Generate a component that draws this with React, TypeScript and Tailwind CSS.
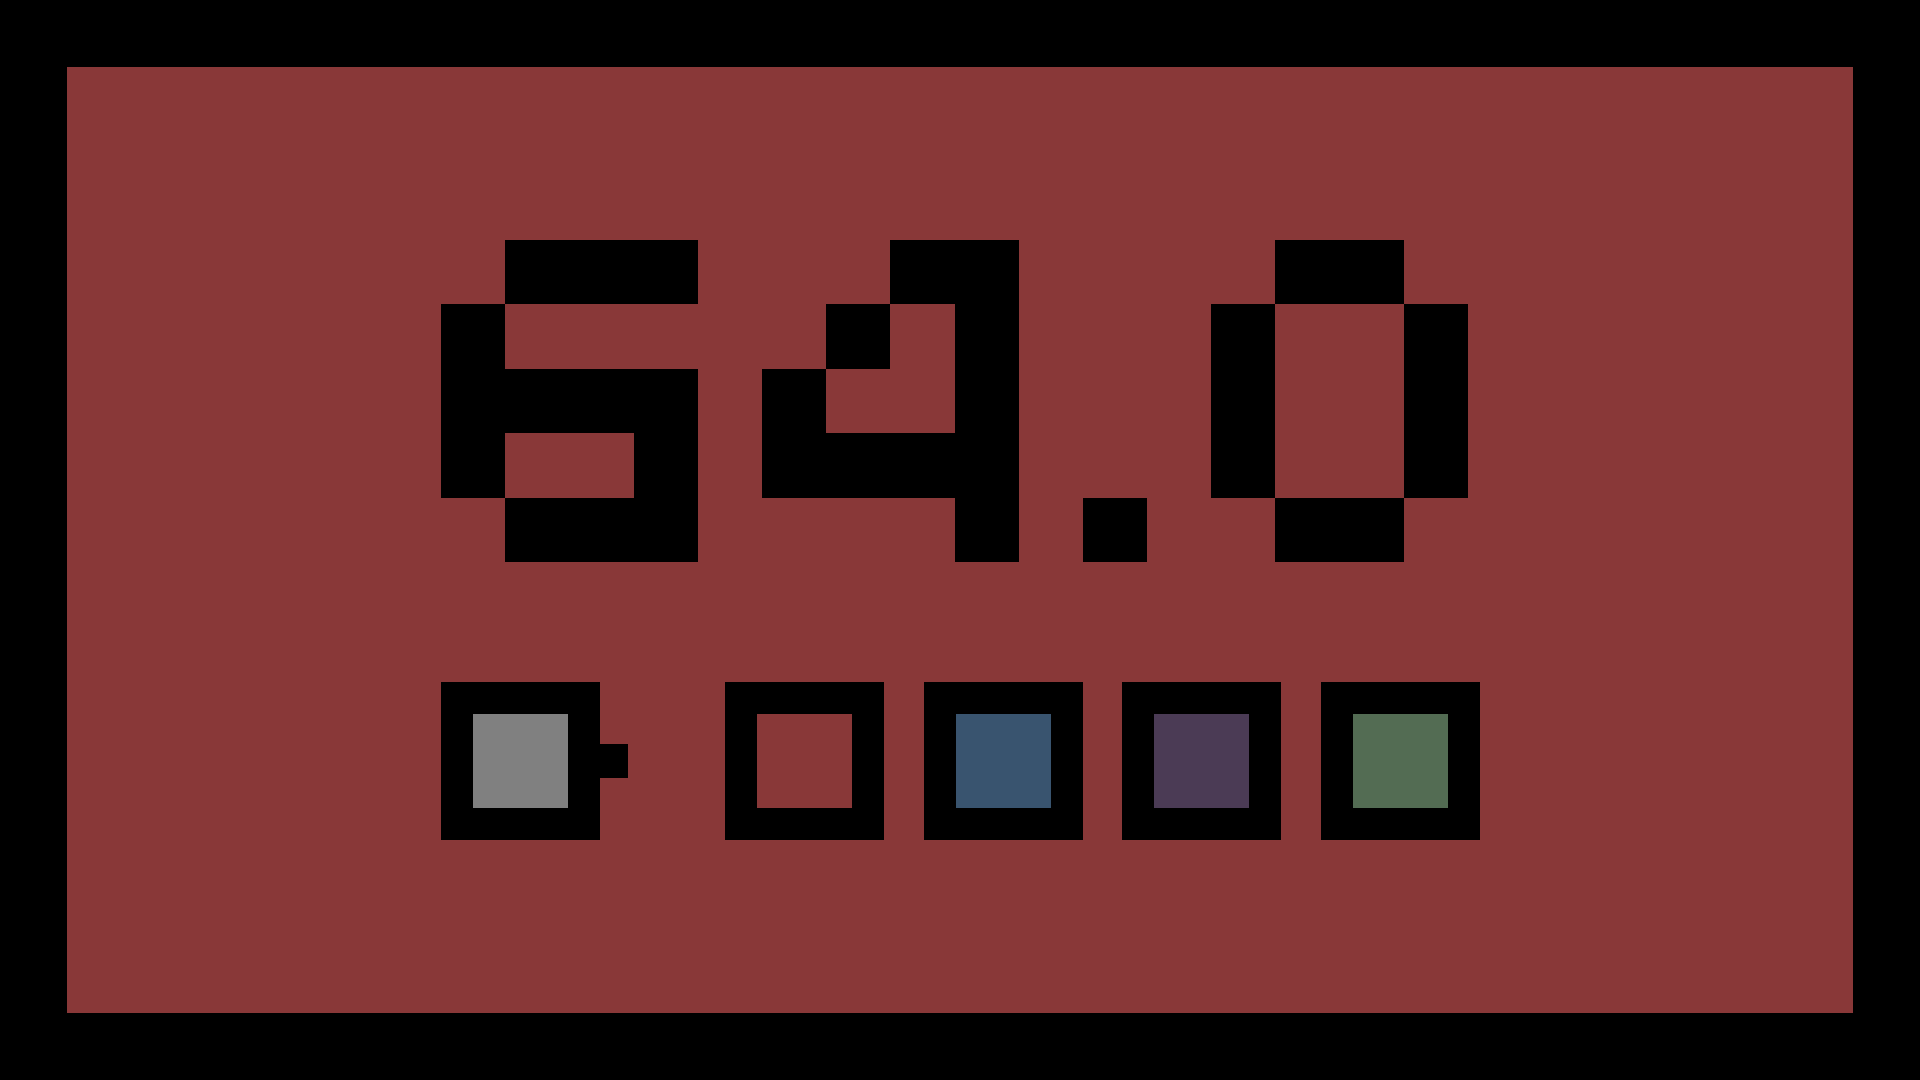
import React from "react";

// 4x5 bitmap font for the readout, "#" = lit cell
const GLYPHS: Record<string, string[]> = {
    "6": [".###", "#...", "####", "#..#", ".###"],
    "4": ["..##", ".#.#", "#..#", "####", "...#"],
    "0": [".##.", "#..#", "#..#", "#..#", ".##."],
    ".": [".", ".", ".", ".", "#"],
};

const SWATCHES = [
    { id: "gray", color: "bg-[#808080]", selected: true },
    { id: "red", color: "bg-[#893838]", selected: false },
    { id: "blue", color: "bg-[#39546f]", selected: false },
    { id: "purple", color: "bg-[#4b3b55]", selected: false },
    { id: "green", color: "bg-[#536c53]", selected: false },
];

export default function App() {
    const value = "64.0";

    return (
        <main className="w-screen h-screen bg-black p-[67px]">
            <section className="h-full w-full bg-[#893838] pl-[374px] pt-[173px]">
                <div className="flex gap-[64.2px]" aria-label={value}>
                    <span className="sr-only">{value}</span>
                    {value.split("").map((ch, i) => (
                        <Glyph key={i} rows={GLYPHS[ch]} />
                    ))}
                </div>

                <div className="flex items-center gap-[39.5px] mt-[120px]">
                    {SWATCHES.map((s) => (
                        <Swatch key={s.id} color={s.color} selected={s.selected} />
                    ))}
                </div>
            </section>
        </main>
    );
}

function Glyph({ rows }: { rows: string[] }) {
    return (
        <div className="flex flex-col" aria-hidden="true">
            {rows.map((row, r) => (
                <div key={r} className="flex">
                    {row.split("").map((c, col) => (
                        <div
                            key={col}
                            className={c === "#" ? "w-[64.2px] h-[64.4px] bg-black" : "w-[64.2px] h-[64.4px]"}
                        />
                    ))}
                </div>
            ))}
        </div>
    );
}

function Swatch({ color, selected }: { color: string; selected?: boolean }) {
    return (
        <button
            className={`relative w-[159px] h-[158px] border-[32px] border-black ${color} ${selected ? "mr-[85.5px]" : ""}`}
        >
            {selected && (
                <span className="absolute -right-[60px] top-1/2 -translate-y-1/2 w-[28px] h-[34px] bg-black" />
            )}
        </button>
    );
}
